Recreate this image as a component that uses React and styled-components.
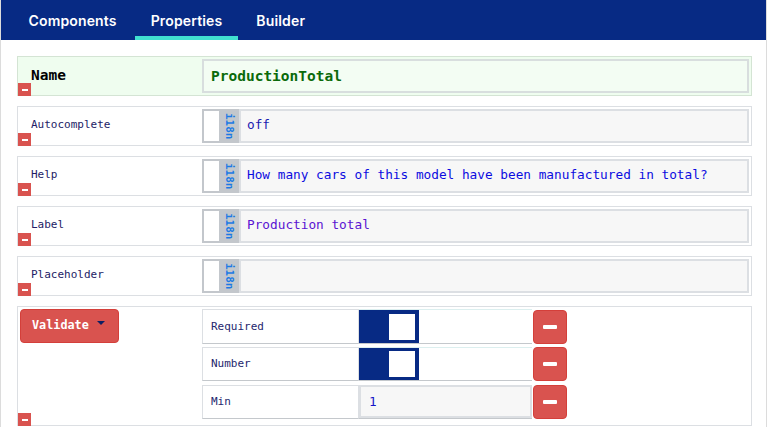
import React from "react";
import styled, { createGlobalStyle } from "styled-components";

const Global = createGlobalStyle`
  html, body { margin: 0; padding: 0; background: #fff; }
  * { box-sizing: border-box; }
`;

const MONO = `"DejaVu Sans Mono", "Liberation Mono", monospace`;

const Frame = styled.div`
  width: 767px;
  min-height: 427px;
  border-left: 1px solid #dcdcdc;
  border-right: 1px solid #dcdcdc;
`;

const TabBar = styled.nav`
  display: flex;
  align-items: stretch;
  gap: 3px;
  height: 40px;
  padding-left: 12px;
  background: #072a84;
`;

const Tab = styled.div`
  display: flex;
  align-items: center;
  padding: 0 15.5px;
  padding-top: 4px;
  border-bottom: 4px solid ${(p) => (p.$active ? "#40e0d0" : "transparent")};
  color: #fff;
  font-family: Inter, "Open Sans", sans-serif;
  font-weight: 600;
  font-size: 14px;
  letter-spacing: 0.15px;
`;

const Content = styled.div`
  display: flex;
  flex-direction: column;
  gap: 10px;
  padding: 16px 14px 0 16px;
`;

const PropRow = styled.div`
  position: relative;
  display: grid;
  grid-template-columns: 184px 1fr;
  height: 40px;
  padding: 2px 2px 2px 0;
  border: 1px solid ${(p) => (p.$highlight ? "#d4e4d4" : "#dcdfe3")};
  background: ${(p) => (p.$highlight ? "#effdef" : "#fff")};
`;

const Label = styled.div`
  display: flex;
  align-items: center;
  padding-left: 13px;
  padding-bottom: ${(p) => (p.$strong ? "2px" : "4px")};
  font-family: ${MONO};
  font-size: ${(p) => (p.$strong ? "14.5px" : "11px")};
  font-weight: ${(p) => (p.$strong ? 700 : 400)};
  color: ${(p) => (p.$strong ? "#000" : "#231c66")};
`;

const MiniMinus = styled.span`
  position: absolute;
  left: 0;
  bottom: -1px;
  width: 13px;
  height: 13px;
  background: #d9534f;
  display: flex;
  align-items: center;
  justify-content: center;
  &::after {
    content: "";
    width: 6px;
    height: 2px;
    background: #fff;
  }
`;

const InputGroup = styled.div`
  display: flex;
  height: 100%;
`;

const I18nBox = styled.div`
  display: flex;
  width: 37px;
  border: 2px solid #c3c7cc;
  border-right: none;
  background: #c3c7cc;
`;

const CheckArea = styled.div`
  width: 15px;
  background: #fff;
`;

const I18nTag = styled.div`
  flex: 1;
  display: flex;
  align-items: center;
  justify-content: center;
  writing-mode: vertical-rl;
  font-family: ${MONO};
  font-size: 11px;
  font-weight: 700;
  color: #1c7ae4;
  padding-left: 1px;
`;

const TextInput = styled.div`
  flex: 1;
  display: flex;
  align-items: center;
  padding: 0 6px 3px;
  border: 2px solid ${(p) => (p.$highlight ? "#d8dede" : "#dcdfe3")};
  background: ${(p) => (p.$highlight ? "#f3fdf3" : "#f7f7f7")};
  font-family: ${MONO};
  font-size: ${(p) => (p.$strong ? "14.5px" : "12.75px")};
  font-weight: ${(p) => (p.$strong ? 700 : 400)};
  color: ${(p) => p.$color || "#1414c8"};
  white-space: nowrap;
  overflow: hidden;
  ${(p) => (p.$strong ? "padding-left: 7px; padding-bottom: 1px;" : "")}
`;

const ValidateRow = styled.div`
  position: relative;
  display: grid;
  grid-template-columns: 182px 1fr;
  height: 120px;
  padding: 2px;
  border: 1px solid #dcdfe3;
`;

const DropButton = styled.button`
  display: flex;
  align-items: center;
  gap: 8px;
  width: 99px;
  height: 34px;
  padding: 0 0 2px 11px;
  border: 1px solid #d43f3a;
  border-radius: 4px;
  background: #d9534f;
  color: #fff;
  font-family: ${MONO};
  font-size: 11.8px;
  font-weight: 700;
  cursor: pointer;
  &::after {
    content: "";
    border-left: 4px solid transparent;
    border-right: 4px solid transparent;
    border-top: 4px solid #0e1f63;
    margin-top: -4px;
  }
`;

const SubTable = styled.div`
  display: flex;
  flex-direction: column;
  gap: 4px;
`;

const SubRow = styled.div`
  display: grid;
  grid-template-columns: 157px 172px 34px;
  column-gap: 1px;
  height: 34px;
`;

const SubLabel = styled.div`
  display: flex;
  align-items: center;
  padding-left: 8px;
  padding-bottom: 1px;
  border: 1px solid #dcdfe3;
  border-bottom-color: #c4c8cc;
  font-family: ${MONO};
  font-size: 11px;
  color: #25276e;
`;

const ControlCell = styled.div`
  display: flex;
  border-top: 1px solid #dcefef;
  border-bottom: 1px solid #c4c8cc;
  margin-left: -1px;
`;

const Switch = styled.div`
  width: 60px;
  height: 100%;
  display: flex;
  align-items: center;
  justify-content: flex-end;
  padding-right: 4px;
  background: #072a84;
  &::after {
    content: "";
    width: 26px;
    height: 26px;
    background: #fff;
  }
`;

const NumberInput = styled.div`
  flex: 1;
  display: flex;
  align-items: center;
  padding: 0 8px 1px;
  margin-top: -1px;
  border: 2px solid #dcdfe3;
  background: #f7f7f7;
  font-family: ${MONO};
  font-size: 12.75px;
  color: #1414c8;
`;

const Minus = styled.button`
  display: flex;
  align-items: center;
  justify-content: center;
  width: 34px;
  height: 34px;
  margin-top: ${(p) => p.$offset || 0}px;
  padding: 0;
  border: 1px solid #d43f3a;
  border-radius: 4px;
  background: #d9534f;
  cursor: pointer;
  &::after {
    content: "";
    width: 14px;
    height: 4px;
    background: #fff;
    border-radius: 1px;
  }
`;

const i18nRows = [
  { label: "Autocomplete", value: "off", color: "#1a1ab0" },
  {
    label: "Help",
    value: "How many cars of this model have been manufactured in total?",
    color: "#0c0ce0",
  },
  { label: "Label", value: "Production total", color: "#5a14d2" },
  { label: "Placeholder", value: "", color: "#1414c8" },
];

export default function App() {
  return (
    <Frame>
      <Global />
      <TabBar>
        <Tab>Components</Tab>
        <Tab $active>Properties</Tab>
        <Tab>Builder</Tab>
      </TabBar>
      <Content>
        <PropRow $highlight>
          <Label $strong>Name</Label>
          <TextInput $highlight $strong $color="#0a6a0a">
            ProductionTotal
          </TextInput>
          <MiniMinus />
        </PropRow>
        {i18nRows.map((r) => (
          <PropRow key={r.label}>
            <Label>{r.label}</Label>
            <InputGroup>
              <I18nBox>
                <CheckArea />
                <I18nTag>i18n</I18nTag>
              </I18nBox>
              <TextInput $color={r.color}>{r.value}</TextInput>
            </InputGroup>
            <MiniMinus />
          </PropRow>
        ))}
        <ValidateRow>
          <div>
            <DropButton>Validate</DropButton>
          </div>
          <SubTable>
            <SubRow>
              <SubLabel>Required</SubLabel>
              <ControlCell>
                <Switch />
              </ControlCell>
              <Minus $offset={1} />
            </SubRow>
            <SubRow>
              <SubLabel>Number</SubLabel>
              <ControlCell>
                <Switch />
              </ControlCell>
              <Minus />
            </SubRow>
            <SubRow>
              <SubLabel>Min</SubLabel>
              <ControlCell>
                <NumberInput>1</NumberInput>
              </ControlCell>
              <Minus />
            </SubRow>
          </SubTable>
          <MiniMinus />
        </ValidateRow>
      </Content>
    </Frame>
  );
}
